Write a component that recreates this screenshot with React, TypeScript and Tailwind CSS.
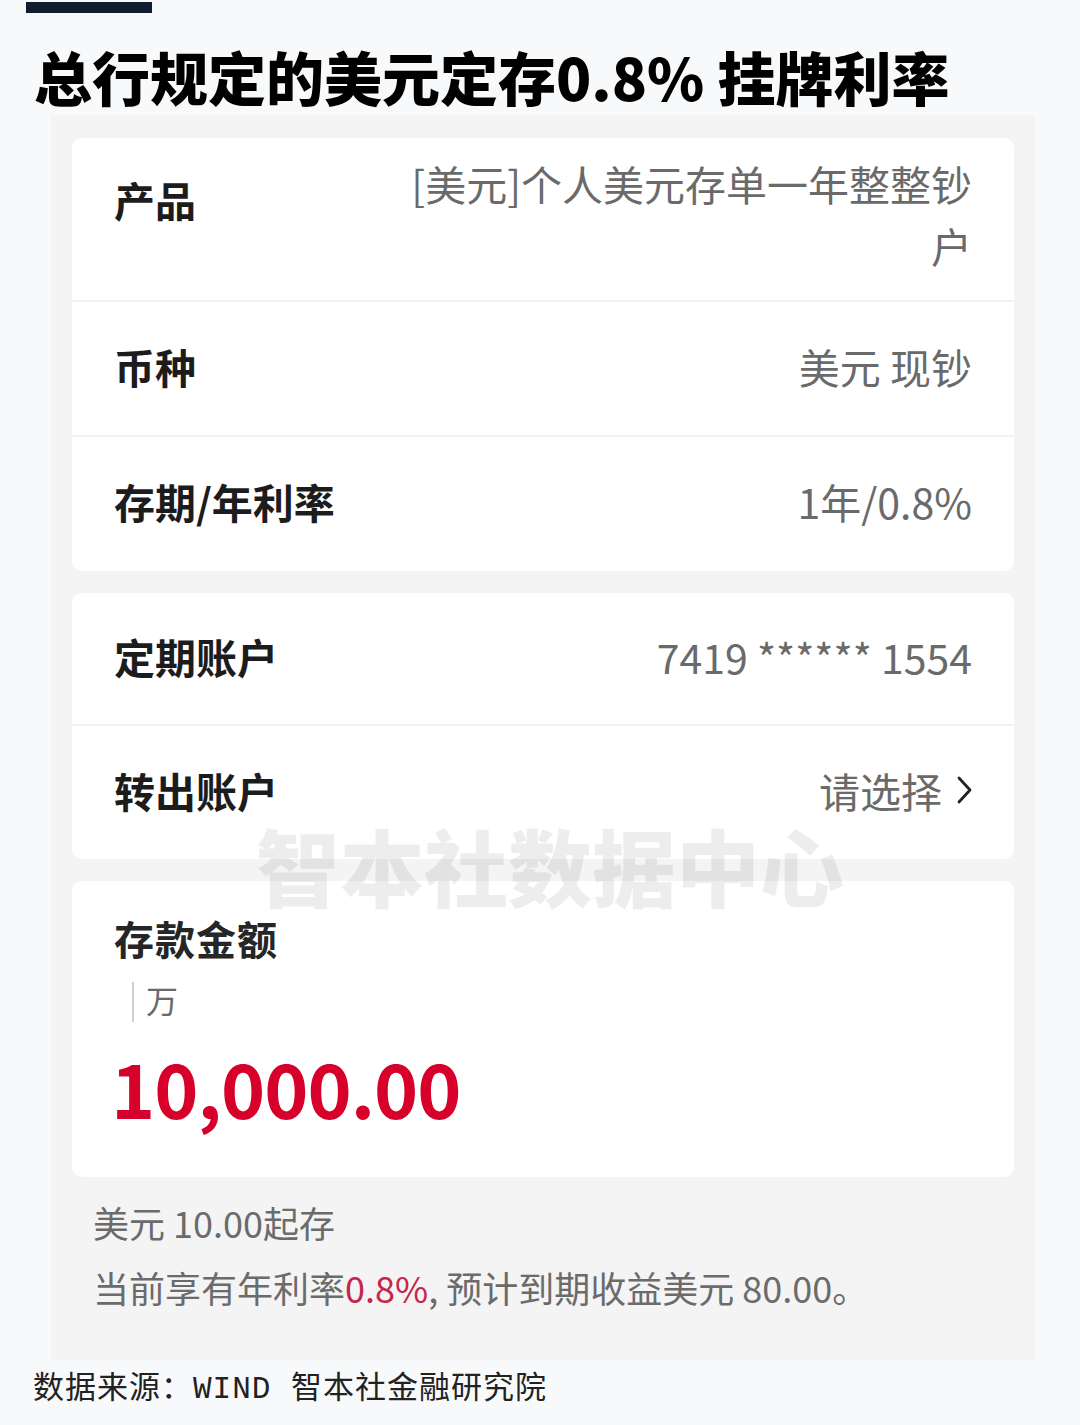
import React from "react";

const Row = ({ label, children, last, h }: { label: string; children: React.ReactNode; last?: boolean; h: string }) => (
  <div className={`flex items-center justify-between ${h} pl-[42px] pr-[42px] pb-[5px] ${last ? "" : "border-b-2 border-[#f2f2f2]"}`}>
    <div className="text-[41px] font-bold text-[#1c1c1c] leading-none">{label}</div>
    <div className="text-[41px] text-[#6a6a6a] leading-none flex items-center">{children}</div>
  </div>
);

export default function App() {
  return (
    <div className="w-[1080px] h-[1425px] bg-[#f8f9fb] font-['Noto_Sans_CJK_SC','Noto_Sans',sans-serif] overflow-hidden">
      <div className="ml-[26px] mt-[2px] w-[126px] h-[11px] bg-[#0f1e2e]" />
      <div className="ml-[34px] mt-[28px] text-[58px] leading-[70px] font-black text-black">
        总行规定的美元定存0.8% 挂牌利率
      </div>
      <div className="relative ml-[51px] mt-[4px] w-[984px] h-[1245px] bg-[#f4f4f4] pt-[23px] px-[21px]">
        <div className="bg-white rounded-[10px]">
          <div className="flex justify-between pl-[42px] pr-[42px] pt-[14px] h-[164px] border-b-2 border-[#f2f2f2]">
            <div className="mt-[16px] text-[41px] font-bold text-[#1c1c1c] leading-[62px]">产品</div>
            <div className="text-[41px] text-[#6a6a6a] leading-[62px] text-right">
              [美元]个人美元存单一年整整钞
              <br />户
            </div>
          </div>
          <Row label="币种" h="h-[135px]">美元 现钞</Row>
          <Row label="存期/年利率" h="h-[134px]" last>1年/0.8%</Row>
        </div>

        <div className="bg-white rounded-[10px] mt-[22px]">
          <Row label="定期账户" h="h-[133px]">7419 ****** 1554</Row>
          <Row label="转出账户" h="h-[133px]" last>
            <span>请选择</span>
            <svg className="ml-[12px] -mr-[2px]" width="20" height="34" viewBox="0 0 20 34" fill="none">
              <path d="M5 5 L16 17 L5 29" stroke="#222" strokeWidth="2.8" strokeLinecap="round" strokeLinejoin="round" />
            </svg>
          </Row>
        </div>

        <div className="bg-white rounded-[10px] mt-[22px] h-[296px] pl-[42px] pt-[29px]">
          <div className="text-[40px] font-bold text-[#262626] leading-[56px] tracking-[1px]">存款金额</div>
          <div className="flex items-center mt-[16px] h-[40px] pl-[18px]">
            <div className="w-[2px] h-[40px] bg-[#cfcfcf]" />
            <div className="ml-[12px] text-[32px] text-[#6a6a6a] leading-none -mt-[6px]">万</div>
          </div>
          <div className="mt-[20px] -ml-[3px] text-[75px] font-bold text-[#d6002b] leading-[90px] tracking-[-1px]">10,000.00</div>
        </div>

        <div className="pl-[21px] mt-[13px] text-[36px] text-[#6b6b6b] leading-[65px]">
          <div>美元 10.00起存</div>
          <div>
            当前享有年利率<span className="text-[#c8254a]">0.8%</span>, 预计到期收益美元 80.00。
          </div>
        </div>

        <div className="absolute left-[205px] top-[700px] text-[84px] font-black leading-[100px] text-[rgba(0,0,0,0.07)] pointer-events-none">
          智本社数据中心
        </div>
      </div>
      <div className="ml-[33px] mt-[10px] text-[31px] leading-[40px] tracking-[1px] text-[#222] font-['Liberation_Mono','Noto_Sans_CJK_SC',monospace]">
        数据来源：WIND 智本社金融研究院
      </div>
    </div>
  );
}
